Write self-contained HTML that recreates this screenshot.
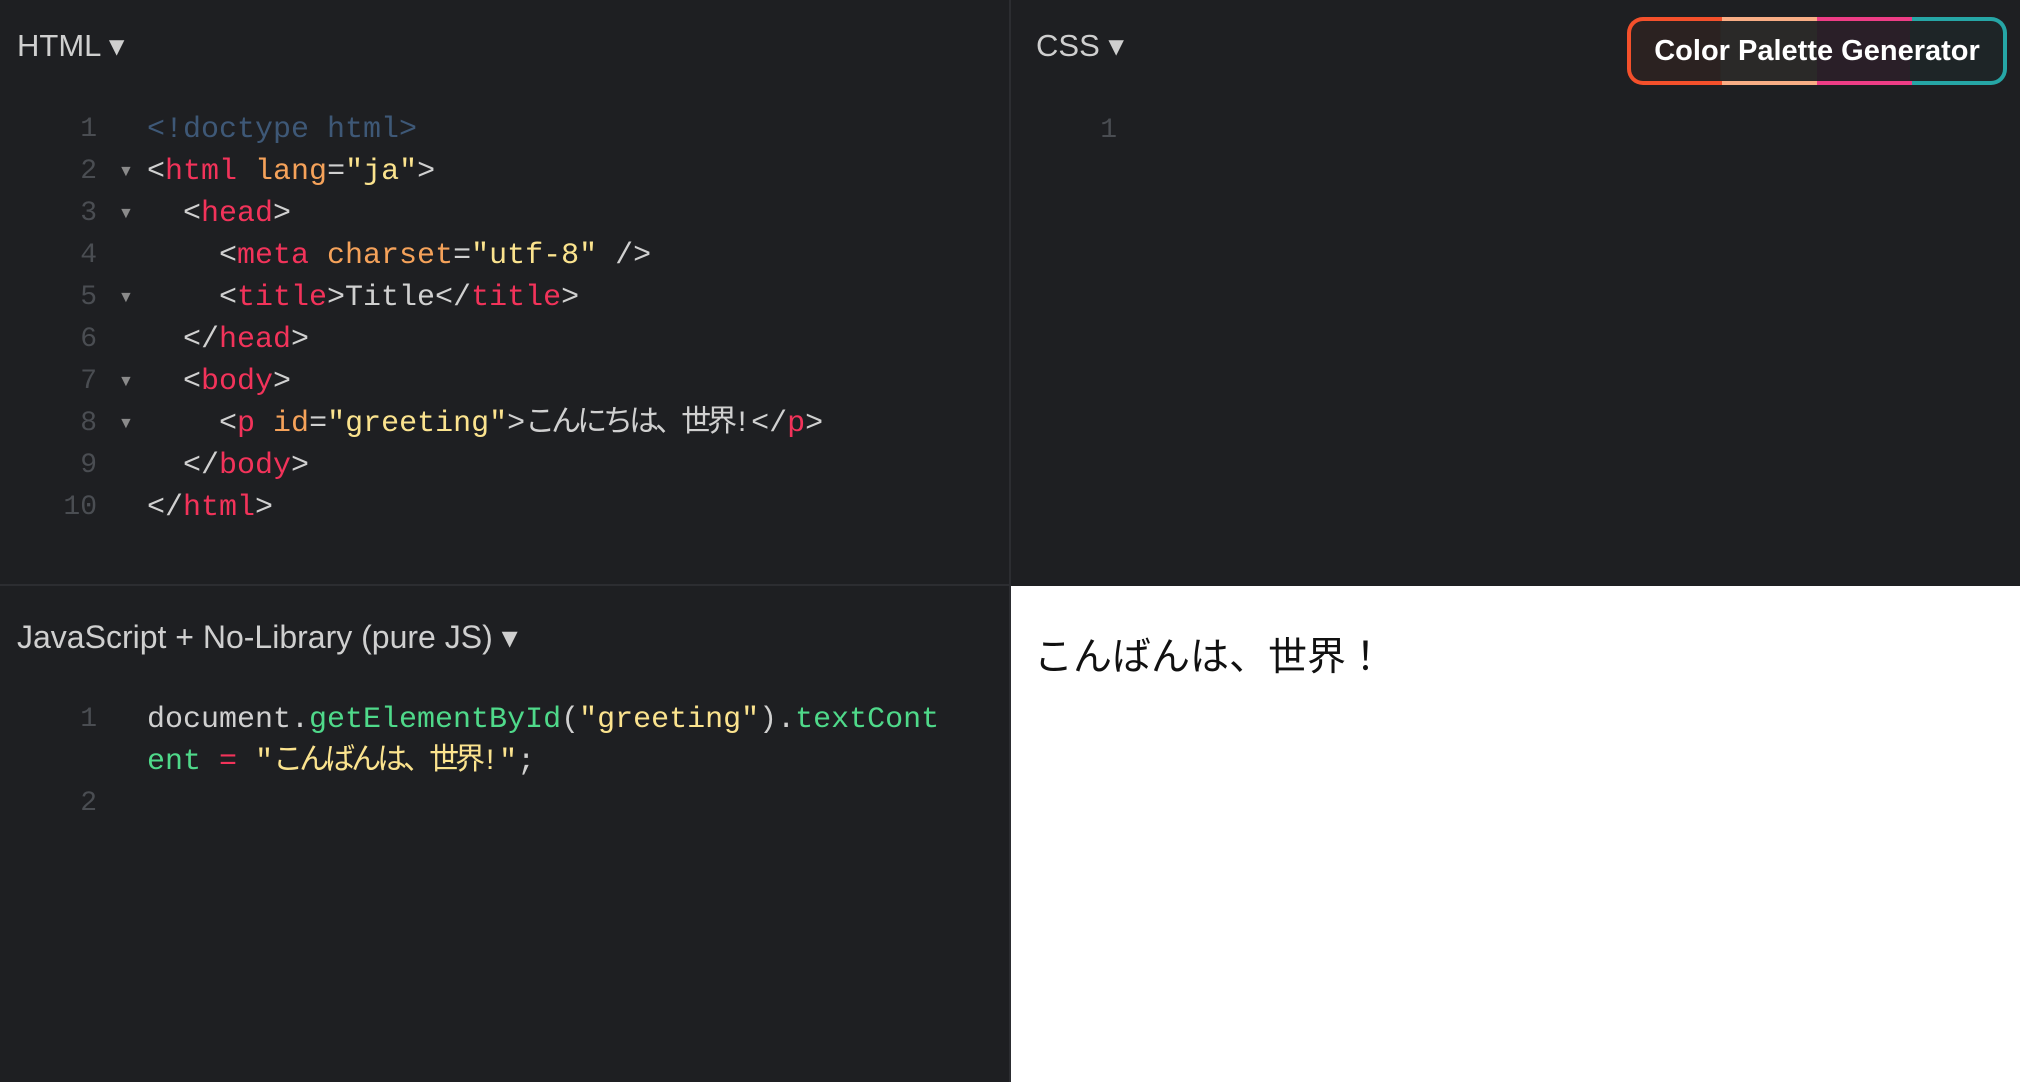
<!DOCTYPE html>
<html><head><meta charset="utf-8"><style>
body{margin:0;width:2020px;height:1082px;background:#1e1f22;position:relative;overflow:hidden;font-family:"Liberation Sans","Noto Sans CJK JP",sans-serif}
.lbl{position:absolute;color:#cfcfcf;font-size:31px;line-height:40px}
.code{position:absolute;font-family:"Liberation Mono","Noto Sans CJK JP",monospace;font-size:30px;line-height:42px;color:#d0d0d0;white-space:pre}
.nums{position:absolute;font-family:"Liberation Mono",monospace;font-size:28px;line-height:42px;color:#4a4d52;text-align:right;width:97px;left:0}
.fold{position:absolute;left:118px;font-size:16px;line-height:42px;color:#8a8a8a}
.d{color:#3e5877}.t{color:#f2335a}.a{color:#f5a25a}.s{color:#fbe38e}.g{color:#4fd98a}
.j{letter-spacing:-4px}
</style></head><body>
<div style="position:absolute;left:1009px;top:0;width:2px;height:1082px;background:#2c2d31"></div>
<div style="position:absolute;left:0;top:584px;width:1010px;height:2px;background:#2c2d31"></div>
<div style="position:absolute;left:1011px;top:586px;right:0;bottom:0;background:#fff"></div>

<div class="lbl" style="left:17px;top:26px">HTML ▾</div>
<div class="nums" style="top:109px">1<br>2<br>3<br>4<br>5<br>6<br>7<br>8<br>9<br>10</div>
<div class="fold" style="top:151px">▼</div><div class="fold" style="top:193px">▼</div><div class="fold" style="top:277px">▼</div><div class="fold" style="top:361px">▼</div><div class="fold" style="top:403px">▼</div>
<div class="code" style="left:147px;top:109px"><span class="d">&lt;!doctype html&gt;</span>
&lt;<span class="t">html</span> <span class="a">lang</span>=<span class="s">"ja"</span>&gt;
  &lt;<span class="t">head</span>&gt;
    &lt;<span class="t">meta</span> <span class="a">charset</span>=<span class="s">"utf-8"</span> /&gt;
    &lt;<span class="t">title</span>&gt;Title&lt;/<span class="t">title</span>&gt;
  &lt;/<span class="t">head</span>&gt;
  &lt;<span class="t">body</span>&gt;
    &lt;<span class="t">p</span> <span class="a">id</span>=<span class="s">"greeting"</span>&gt;<span class="j">こんにちは、世界</span>!&lt;/<span class="t">p</span>&gt;
  &lt;/<span class="t">body</span>&gt;
&lt;/<span class="t">html</span>&gt;</div>

<div class="lbl" style="left:1036px;top:26px">CSS ▾</div>
<div class="nums" style="left:1020px;width:97px;top:110px">1</div>

<div style="position:absolute;left:1627px;top:17px;width:380px;height:68px;border-radius:16px;background:linear-gradient(90deg,#f4502b 0 25%,#f8ad85 25% 50%,#ee3d86 50% 75%,#26a6a6 75%)">
<div style="position:absolute;left:4px;top:4px;right:4px;bottom:4px;border-radius:12px;background:linear-gradient(90deg,#2b2221 0 24%,#2a2928 24% 50%,#2a1f28 50% 75%,#1e2527 75%);color:#fff;font-weight:bold;font-size:29px;line-height:60px;text-align:center">Color Palette Generator</div></div>

<div class="lbl" style="left:17px;top:617px;font-size:32px">JavaScript + No-Library (pure JS) ▾</div>
<div class="nums" style="top:699px">1<br><br>2</div>
<div class="code" style="left:147px;top:699px">document.<span class="g">getElementById</span>(<span class="s">"greeting"</span>).<span class="g">textCont</span>
<span class="g">ent</span> <span class="t">=</span> <span class="s">"<span class="j">こんばんは、世界</span>!"</span>;</div>

<div style="position:absolute;left:1034px;top:632px;font-size:39px;line-height:52px;color:#111">こんばんは、世界！</div>
</body></html>
